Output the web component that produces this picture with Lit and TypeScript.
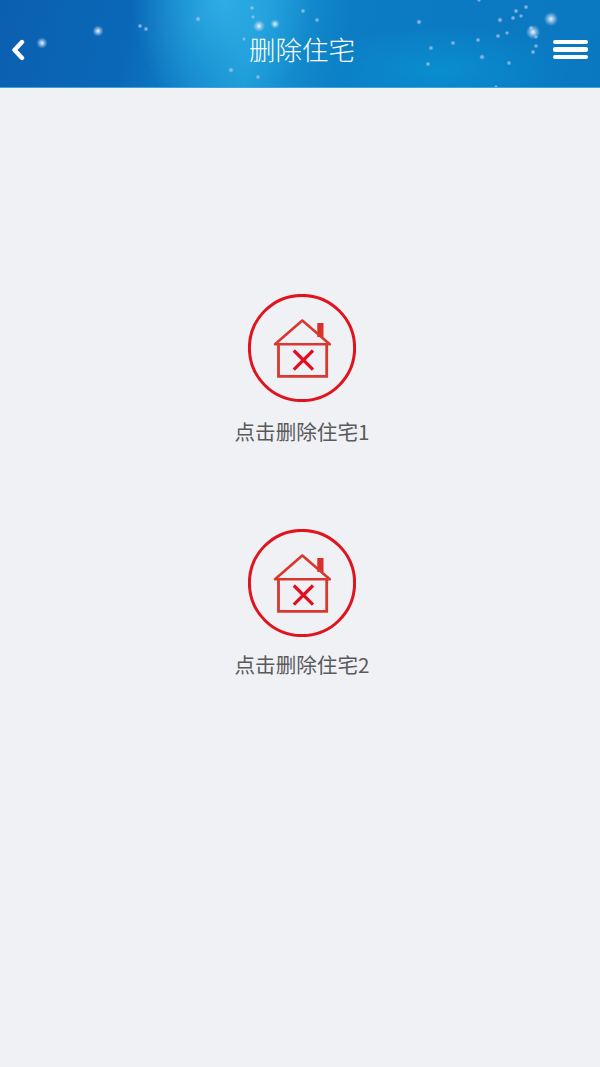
import { LitElement, html, css, svg } from "lit";
import { customElement } from "lit/decorators.js";

// x, y, radius of the stars painted in the header image
const STARS: [number, number, number][] = [
  [98, 31, 3.5], [42, 43, 3.5], [140, 26, 1.6], [146, 29, 1.6], [198, 19, 1.8], [252, 8, 1.6],
  [253, 17, 1.4], [259, 26, 3.8], [275, 24, 3], [244, 39, 1.4], [231, 70, 1.8], [258, 77, 1.6],
  [303, 11, 1.6], [317, 20, 1.6], [419, 22, 1.8], [431, 48, 1.6], [428, 64, 1.6], [453, 43, 1.6],
  [478, 40, 1.6], [482, 57, 1.8], [500, 20, 1.8], [513, 18, 1.6], [516, 11, 1.6], [526, 7, 1.6],
  [521, 16, 1.4], [498, 36, 1.6], [507, 33, 1.4], [531, 28, 1.5], [533, 32, 4.5], [536, 37, 1.4],
  [536, 46, 1.5], [533, 52, 1.6], [509, 63, 1.6], [551, 19, 4.5], [496, 87, 1.4], [479, 0, 1.4],
];

const ITEMS = [
  { label: "点击删除住宅1", gap: 14, next: 83 },
  { label: "点击删除住宅2", gap: 12, next: 0 },
];

const headerStars = svg`
  <defs>
    <radialGradient id="star">
      <stop offset="0" stop-color="#fff" stop-opacity="0.95"></stop>
      <stop offset="0.35" stop-color="#cfe2f8" stop-opacity="0.7"></stop>
      <stop offset="1" stop-color="#a9c8ee" stop-opacity="0"></stop>
    </radialGradient>
    <radialGradient id="dim">
      <stop offset="0" stop-color="#b4cdf0" stop-opacity="0.9"></stop>
      <stop offset="0.5" stop-color="#9dbde8" stop-opacity="0.65"></stop>
      <stop offset="1" stop-color="#8fb4e4" stop-opacity="0"></stop>
    </radialGradient>
  </defs>
  ${STARS.map(
    ([x, y, r]) =>
      svg`<circle cx=${x} cy=${y} r=${r * 1.6} fill=${r < 2 ? "url(#dim)" : "url(#star)"}></circle>`
  )}
`;

const houseIcon = html`
  <svg class="icon" viewBox="0 0 108 108" fill="none">
    <circle cx="54" cy="54" r="52.6" stroke="#e0141f" stroke-width="3"></circle>
    <rect x="69.3" y="29" width="6.2" height="14" fill="#d9302a"></rect>
    <path d="M27 50.3 54.3 26.5 81.8 50.3Z" stroke="#d9382e" stroke-width="2.6" stroke-linejoin="round"></path>
    <path d="M30.5 50.3V82.3H78.7V50.3" stroke="#d9382e" stroke-width="2.8"></path>
    <path d="M45.8 56.5 65 75.7M65 56.5 45.8 75.7" stroke="#e30f1f" stroke-width="3.2"></path>
  </svg>
`;

@customElement("app-root")
export class AppRoot extends LitElement {
  static styles = css`
    :host {
      display: block;
      width: 600px;
      height: 1067px;
      background: #f0f1f5;
      font-family: "Noto Sans CJK SC", "Noto Sans", sans-serif;
    }

    .header {
      position: relative;
      height: 88px;
      box-sizing: border-box;
      padding-top: 13px;
      display: flex;
      align-items: center;
      justify-content: space-between;
      overflow: hidden;
      border-bottom: 1px solid #3aa5dc;
      background:
        radial-gradient(ellipse 90px 120px at 222px 0, rgba(50, 180, 232, 0.85), rgba(50, 180, 232, 0) 100%),
        radial-gradient(ellipse 130px 45px at 440px 70px, rgba(8, 155, 215, 0.6), rgba(8, 155, 215, 0) 100%),
        linear-gradient(100deg, #0b5fb0 0%, #0a68b8 22%, #1288cc 36%, #1a98d6 42%, #0c7cc4 58%, #0a78c0 100%);
    }

    .stars {
      position: absolute;
      inset: 0;
      width: 600px;
      height: 87px;
    }

    .back, .menu, .title {
      position: relative;
    }

    .back {
      width: 14px;
      height: 22px;
      margin-left: 11px;
    }

    .title {
      margin: 0 0 3px 26px;
      font-size: 26.5px;
      line-height: 36px;
      color: #fff;
      font-weight: 300;
    }

    .menu {
      width: 35px;
      margin-right: 12px;
      margin-bottom: 1px;
      display: flex;
      flex-direction: column;
      gap: 3px;
    }

    .menu span {
      height: 4.3px;
      border-radius: 2px;
      background: #fff;
    }

    .list {
      display: flex;
      flex-direction: column;
      align-items: center;
      padding-top: 206px;
      padding-left: 4px;
    }

    .item {
      display: flex;
      flex-direction: column;
      align-items: center;
    }

    .icon {
      display: block;
      width: 108px;
      height: 108px;
    }

    .label {
      font-size: 20.6px;
      line-height: 30px;
      color: #5a5a5c;
      white-space: nowrap;
    }
  `;

  render() {
    return html`
      <header class="header">
        <svg class="stars" viewBox="0 0 600 87">${headerStars}</svg>
        <svg class="back" viewBox="0 0 14 22" fill="none">
          <path d="M11 3 3.5 11 11 19" stroke="#fff" stroke-width="4.4" stroke-linecap="round" stroke-linejoin="round"></path>
        </svg>
        <h1 class="title">删除住宅</h1>
        <div class="menu"><span></span><span></span><span></span></div>
      </header>
      <main class="list">
        ${ITEMS.map(
          (item) => html`
            <div class="item" style="margin-bottom:${item.next - (item.gap - 14)}px">
              ${houseIcon}
              <div class="label" style="margin-top:${item.gap}px">${item.label}</div>
            </div>
          `
        )}
      </main>
    `;
  }
}
